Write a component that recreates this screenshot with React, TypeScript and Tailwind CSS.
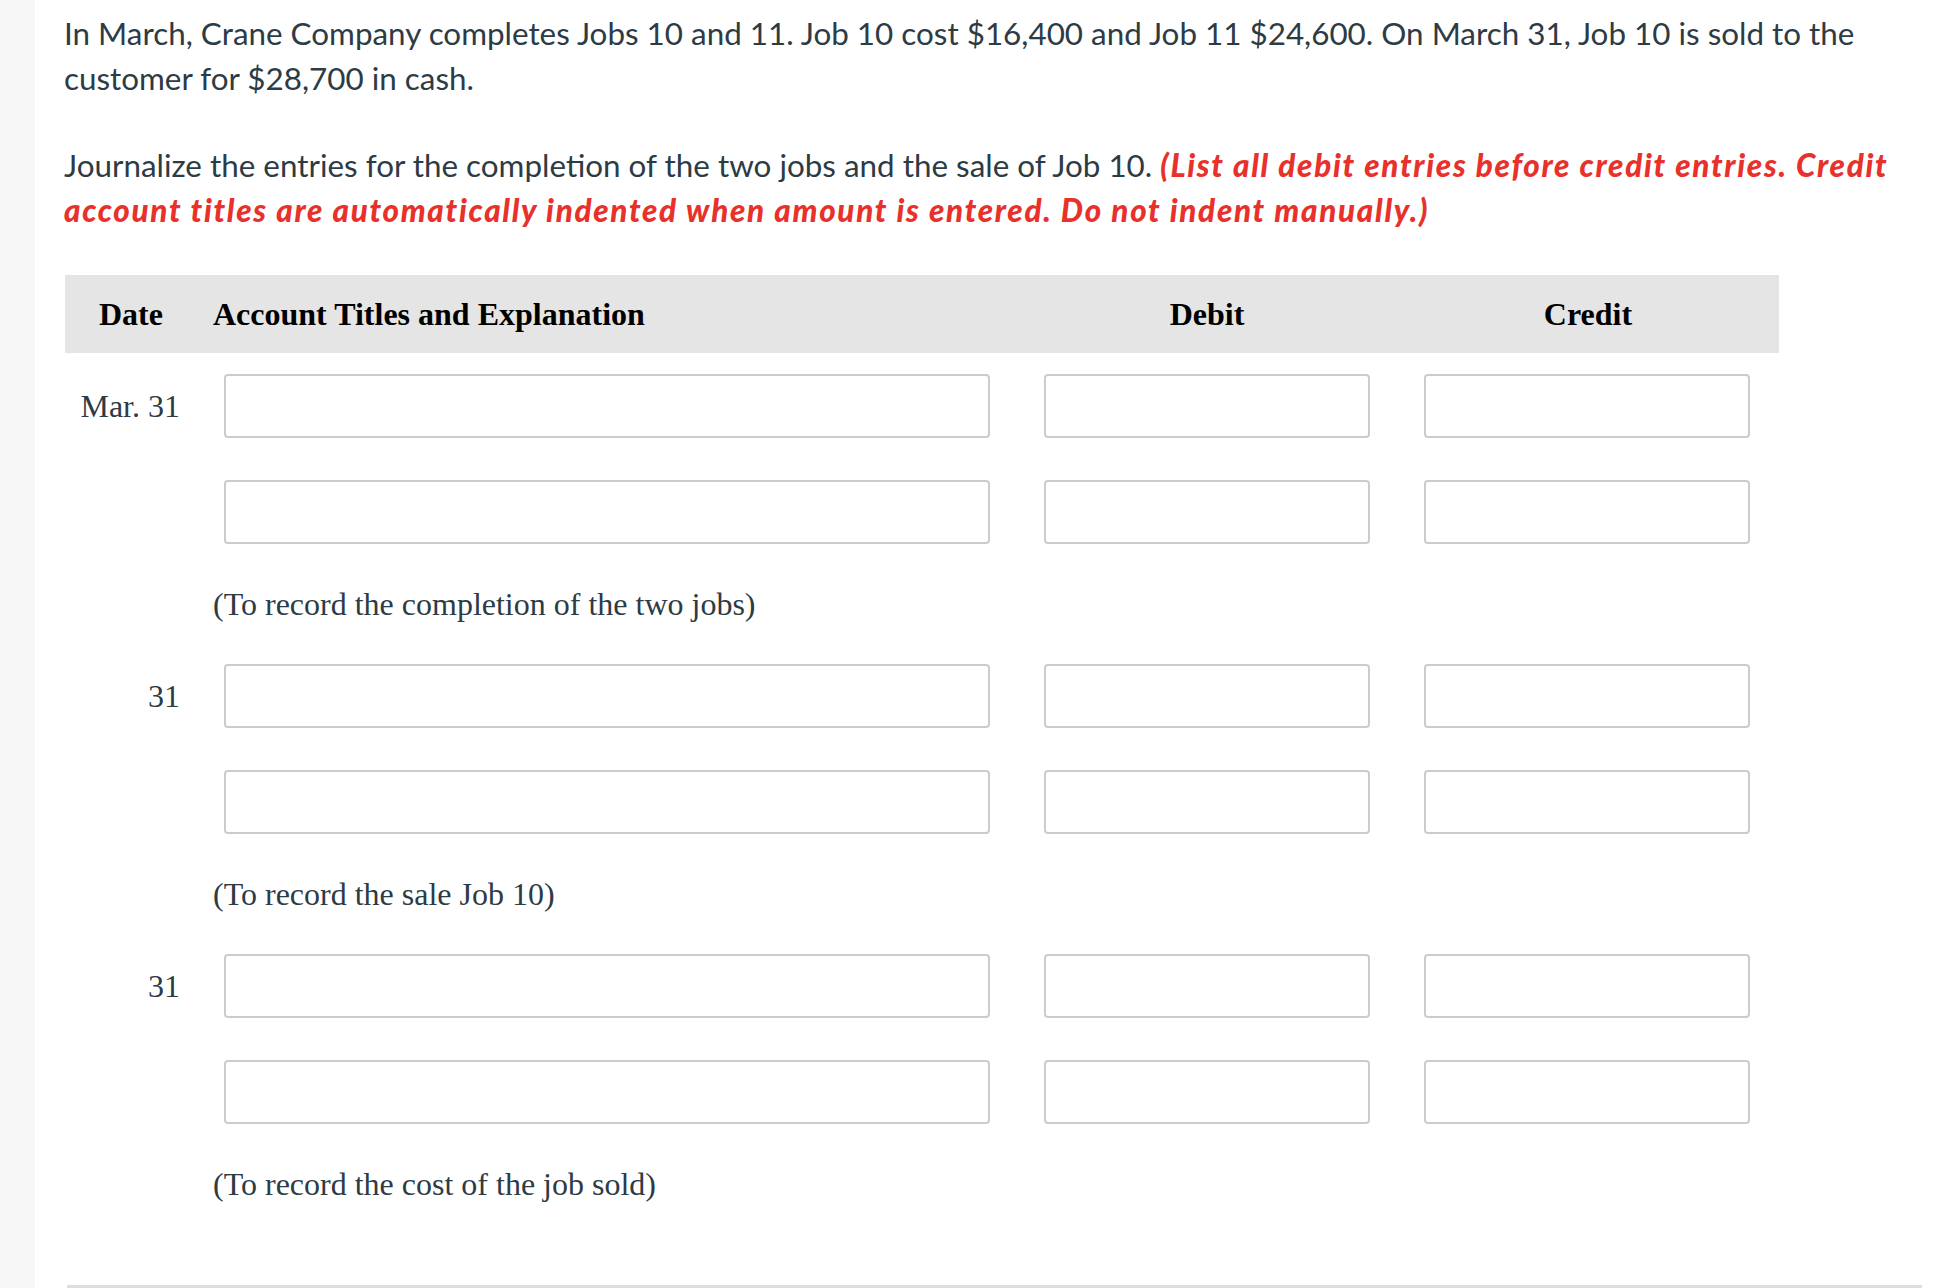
const blocks = [
  { date: 'Mar. 31', note: '(To record the completion of the two jobs)' },
  { date: '31', note: '(To record the sale Job 10)' },
  { date: '31', note: '(To record the cost of the job sold)' },
];

const serif = "font-['Liberation_Serif','Times_New_Roman',serif]";

function Field() {
  return (
    <input
      type="text"
      className="h-[64px] w-full rounded-[4px] border-2 border-[#cccccc] bg-white px-3 text-[30px] outline-none"
    />
  );
}

function EntryRow({ date }: { date?: string }) {
  return (
    <div className="grid grid-cols-[148px_804px_380px_382px] items-center py-[21px]">
      <div className={`pr-[33px] text-right text-[32px] text-[#2d3b45] ${serif}`}>{date}</div>
      <div className="pl-[11px] pr-[27px]">
        <Field />
      </div>
      <div className="px-[27px]">
        <Field />
      </div>
      <div className="pl-[27px] pr-[29px]">
        <Field />
      </div>
    </div>
  );
}

export default function App() {
  return (
    <div className="flex min-h-[1288px] bg-white">
      <div className="w-[35px] shrink-0 bg-[#f7f7f7]" />
      <div className="w-[1887px] pl-[29px] pt-[11px] font-['Lato','Liberation_Sans',sans-serif] text-[#2d3b45]">
        <p className="text-[31.4px] leading-[45px]">
          In March, Crane Company completes Jobs 10 and 11. Job 10 cost $16,400 and Job 11 $24,600. On March 31, Job 10 is sold to the customer for $28,700 in cash.
        </p>
        <p className="mt-[42px] text-[31.4px] leading-[45px]">
          Journalize the entries for the completion of the two jobs and the sale of Job 10.{' '}
          <span className="font-black italic tracking-[1.7px] text-[#e8312a]">
            (List all debit entries before credit entries. Credit account titles are automatically indented when amount is entered. Do not indent manually.)
          </span>
        </p>

        <div className="ml-px mt-[42px] w-[1714px]">
          <div className={`grid h-[78px] grid-cols-[148px_804px_380px_382px] items-center bg-[#e5e5e5] text-[32px] font-bold text-black ${serif}`}>
            <div className="pl-[34px]">Date</div>
            <div>Account Titles and Explanation</div>
            <div className="text-center">Debit</div>
            <div className="text-center">Credit</div>
          </div>

          {blocks.map((b, i) => (
            <div key={i}>
              <EntryRow date={b.date} />
              <EntryRow />
              <div className={`flex h-[78px] items-center pl-[148px] text-[32px] text-[#2d3b45] ${serif}`}>
                {b.note}
              </div>
            </div>
          ))}
        </div>

        <div className="ml-[3px] mt-[62px] h-[3px] bg-[#dddddd]" />
      </div>
    </div>
  );
}
